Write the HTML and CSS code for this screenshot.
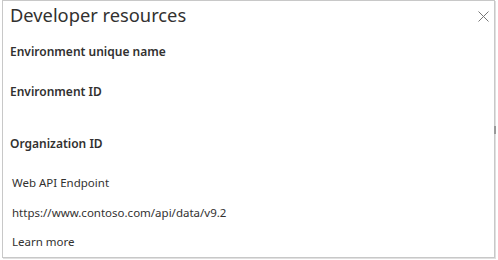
FILE: index.html
```html
<!DOCTYPE html>
<html>
<head>
<meta charset="utf-8">
<link rel="stylesheet" href="styles.css">
</head>
<body>
<div class="panel">
  <div class="header">
    <h1 class="title">Developer resources</h1>
    <button class="close" aria-label="Close">
      <svg width="11" height="11" viewBox="0 0 11 11"><path d="M0.5 0.5L10.5 10.5M10.5 0.5L0.5 10.5" stroke="#777" stroke-width="1" fill="none"/></svg>
    </button>
  </div>
  <div class="label l1">Environment unique name</div>
  <div class="label l2">Environment ID</div>
  <div class="label l3">Organization ID</div>
  <div class="text t1">Web API Endpoint</div>
  <div class="text t2">https://www.contoso.com/api/data/v9.2</div>
  <div class="text t3">Learn more</div>
  <div class="thumb"></div>
</div>
</body>
</html>
```

FILE: styles.css
```css
html, body {
  margin: 0;
  padding: 0;
  background: #fff;
}
body {
  width: 498px;
  height: 260px;
  font-family: "Noto Sans", "Open Sans", sans-serif;
  color: #323130;
}
.panel {
  position: relative;
  box-sizing: border-box;
  margin-left: 2px;
  width: 493px;
  height: 258px;
  border: 1px solid #c8c8c8;
  box-shadow: 1px 1px 0 #e0e0e0;
  background: #fff;
}
.header {
  display: flex;
  align-items: center;
  justify-content: space-between;
  height: 28px;
}
.title {
  margin: 0 0 0 7px;
  font-size: 18.3px;
  font-weight: 400;
  line-height: 28px;
}
.close {
  border: 0;
  background: none;
  padding: 0;
  margin-right: 5px;
  margin-top: 2px;
  width: 11px;
  height: 11px;
  display: flex;
}
.label {
  font-size: 12px;
  font-weight: 600;
  line-height: 18px;
  margin-left: 7px;
}
.l1 { margin-top: 14px; }
.l2 { margin-top: 22px; }
.l3 { margin-top: 34px; }
.text {
  font-size: 11.5px;
  line-height: 16px;
  margin-left: 9px;
}
.t1 { margin-top: 22px; }
.t2 { margin-top: 14px; }
.t3 { margin-top: 13px; }
.thumb {
  position: absolute;
  right: -2px;
  top: 125px;
  width: 2px;
  height: 8px;
  background: #999;
}
```
